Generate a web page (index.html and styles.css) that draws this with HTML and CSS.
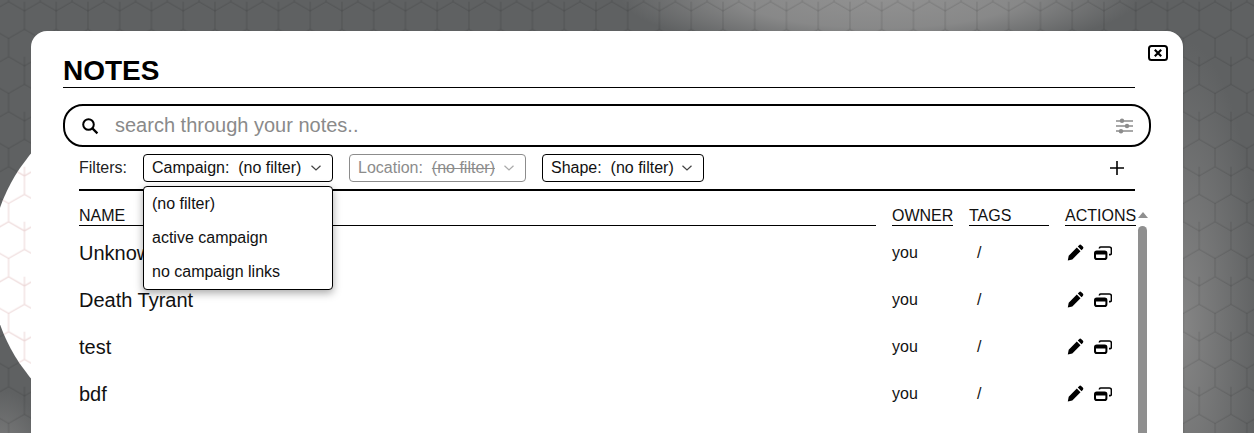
FILE: index.html
```html
<!DOCTYPE html>
<html lang="en">
<head>
<meta charset="utf-8">
<title>Notes</title>
<link rel="stylesheet" href="styles.css">
</head>
<body>
<svg class="backdrop" width="1254" height="433" aria-hidden="true">
  <defs>
    <pattern id="hexDark" width="31.75" height="55" patternUnits="userSpaceOnUse" patternTransform="translate(-7.3 1.7)">
      <path d="M0 9.2 15.875 0 31.75 9.2V27.6L15.875 36.7 0 27.6ZM15.875 36.7V55M0 9.2V0M31.75 9.2V0" fill="none" stroke="#000" stroke-opacity=".16" stroke-width=".9"/>
    </pattern>
    <pattern id="hexLight" width="31.75" height="55" patternUnits="userSpaceOnUse" patternTransform="translate(-7.3 1.7)">
      <path d="M0 9.2 15.875 0 31.75 9.2V27.6L15.875 36.7 0 27.6ZM15.875 36.7V55M0 9.2V0M31.75 9.2V0" fill="none" stroke="#ecd6d6" stroke-width="1"/>
    </pattern>
    <radialGradient id="glowTop">
      <stop offset="0" stop-color="#929292"/>
      <stop offset=".55" stop-color="#929292" stop-opacity=".8"/>
      <stop offset="1" stop-color="#929292" stop-opacity="0"/>
    </radialGradient>
    <radialGradient id="glowRight">
      <stop offset="0" stop-color="#858585"/>
      <stop offset="1" stop-color="#858585" stop-opacity="0"/>
    </radialGradient>
    <clipPath id="disc"><circle cx="165" cy="266" r="175"/></clipPath>
    <symbol id="pencil" viewBox="0 0 17 17">
      <path d="M12.1 1.2a1.6 1.6 0 0 1 2.3 0l1.4 1.4a1.6 1.6 0 0 1 0 2.3l-1.3 1.3-3.7-3.7ZM9.8 3.5l3.7 3.7-8.2 8.2-4.5 1 .9-4.6Z"/>
    </symbol>
    <symbol id="windows" viewBox="0 0 18 14">
      <rect x="1" y="5.4" width="11.4" height="7.6" rx="1.8" fill="none" stroke="#000" stroke-width="2"/>
      <path d="M1 7H12.4" stroke="#000" stroke-width="3"/>
      <path d="M5.4 2.6V2.2A1.2 1.2 0 0 1 6.6 1H15.4A2 2 0 0 1 17.4 3V7.4A1.2 1.2 0 0 1 16.2 8.6H15" fill="none" stroke="#000" stroke-width="1.6"/>
    </symbol>
    <symbol id="chev" viewBox="0 0 10 6">
      <path d="M.5.7 5 5 9.5.7" fill="none" stroke="currentColor" stroke-width="1.2"/>
    </symbol>
  </defs>
  <rect width="1254" height="433" fill="#5f6162"/>
  <ellipse cx="880" cy="-5" rx="260" ry="60" fill="url(#glowTop)"/>
  <ellipse cx="1183" cy="330" rx="78" ry="290" fill="url(#glowRight)"/>
  <ellipse cx="0" cy="470" rx="50" ry="80" fill="url(#glowRight)"/>
  <rect width="1254" height="433" fill="url(#hexDark)"/>
  <circle cx="165" cy="266" r="175" fill="#fff"/>
  <rect width="1254" height="433" fill="url(#hexLight)" clip-path="url(#disc)"/>
</svg>

<main class="modal">
  <button class="close" type="button" aria-label="Close">
    <svg width="20" height="16" viewBox="0 0 20 16"><rect x="1" y="1" width="18" height="14" rx="2.5" fill="none" stroke="#000" stroke-width="2"/><path d="M6.8 4.8 13.2 11.2M13.2 4.8 6.8 11.2" stroke="#000" stroke-width="2.2"/></svg>
  </button>
  <h1 class="title">NOTES</h1>

  <div class="search">
    <svg class="search-icon" width="18" height="18" viewBox="0 0 18 18"><circle cx="7.5" cy="7.5" r="5.3" fill="none" stroke="#000" stroke-width="2"/><path d="M11.4 11.4 16.4 16.4" stroke="#000" stroke-width="2.2"/></svg>
    <span class="placeholder">search through your notes..</span>
    <svg class="sliders" width="17" height="16" viewBox="0 0 17 16"><path d="M0 3H17M0 8H17M0 13H17" stroke="#8c8c8c" stroke-width="1.6"/><circle cx="6" cy="2.8" r="2.2" fill="#8c8c8c"/><circle cx="11" cy="8" r="2.2" fill="#8c8c8c"/><circle cx="5" cy="13.2" r="2.2" fill="#8c8c8c"/></svg>
  </div>

  <div class="filters">
    <span class="filters-label">Filters:</span>
    <div class="select-wrap">
      <div class="select select-campaign"><span>Campaign:&nbsp; (no filter)</span><svg class="chev"><use href="#chev"/></svg></div>
      <ul class="menu">
        <li>(no filter)</li>
        <li>active campaign</li>
        <li>no campaign links</li>
      </ul>
    </div>
    <div class="select select-location disabled"><span>Location:&nbsp; <s>(no filter)</s></span><svg class="chev"><use href="#chev"/></svg></div>
    <div class="select select-shape"><span>Shape:&nbsp; (no filter)</span><svg class="chev"><use href="#chev"/></svg></div>
    <svg class="plus" width="14" height="14" viewBox="0 0 14 14"><path d="M7 0V14M0 7H14" stroke="#000" stroke-width="1.6"/></svg>
  </div>

  <div class="table-area">
    <div class="table">
      <div class="row head">
        <span class="th">NAME</span><span class="th">OWNER</span><span class="th">TAGS</span><span class="th">ACTIONS</span>
      </div>
      <div class="row note"><span class="name">Unknown</span><span>you</span><span class="tags">/</span><span class="actions"><svg class="ic-pencil"><use href="#pencil"/></svg><svg class="ic-windows"><use href="#windows"/></svg></span></div>
      <div class="row note"><span class="name">Death Tyrant</span><span>you</span><span class="tags">/</span><span class="actions"><svg class="ic-pencil"><use href="#pencil"/></svg><svg class="ic-windows"><use href="#windows"/></svg></span></div>
      <div class="row note"><span class="name">test</span><span>you</span><span class="tags">/</span><span class="actions"><svg class="ic-pencil"><use href="#pencil"/></svg><svg class="ic-windows"><use href="#windows"/></svg></span></div>
      <div class="row note"><span class="name">bdf</span><span>you</span><span class="tags">/</span><span class="actions"><svg class="ic-pencil"><use href="#pencil"/></svg><svg class="ic-windows"><use href="#windows"/></svg></span></div>
    </div>
    <div class="scrollbar">
      <svg class="scroll-up" width="10" height="6" viewBox="0 0 10 6"><path d="M5 0 10 6H0Z" fill="#8f8f8f"/></svg>
      <div class="thumb"></div>
    </div>
  </div>
</main>
</body>
</html>
```

FILE: styles.css
```css
* { box-sizing: border-box; }

html, body {
  margin: 0;
  height: 433px;
  overflow: hidden;
}

body {
  background: #5f6162;
  font-family: "Liberation Sans", Arial, sans-serif;
  color: #000;
  padding: 31px 71px 0 31px;
}

.backdrop {
  position: absolute;
  left: 0;
  top: 0;
}

.modal {
  position: relative;
  width: 1152px;
  height: 402px;
  overflow: hidden;
  background: #fff;
  border-radius: 16px 16px 0 0;
  padding: 22px 32px 0;
}

.close {
  position: absolute;
  right: 15px;
  top: 14px;
  padding: 0;
  border: 0;
  background: none;
  line-height: 0;
}

.title {
  margin: 0 16px 0 0;
  height: 35px;
  font-size: 28px;
  line-height: 36px;
  font-weight: 700;
  border-bottom: 1px solid #000;
}

.search {
  display: flex;
  align-items: center;
  height: 43px;
  margin-top: 16px;
  padding: 0 16px 0 16px;
  border: 2px solid #000;
  border-radius: 20px;
}

.search-icon { flex: none; }

.placeholder {
  flex: 1;
  margin-left: 16px;
  font-size: 20px;
  color: #8a8a8a;
}

.filters {
  display: flex;
  align-items: center;
  height: 37px;
  margin: 7px 16px 0 16px;
  padding-bottom: 7px;
  border-bottom: 2px solid #000;
  font-size: 16px;
}

.filters-label {
  width: 64px;
  color: #222;
}

.select-wrap { position: relative; }

.select {
  display: flex;
  align-items: center;
  justify-content: space-between;
  height: 28px;
  padding: 0 11px 0 8px;
  border: 1px solid #000;
  border-radius: 4px;
  color: #111;
  white-space: nowrap;
}

.select-campaign { width: 190px; }
.select-location { width: 177px; }
.select-shape { width: 162px; }

.select-wrap + .select,
.select + .select { margin-left: 16px; }

.select.disabled {
  color: #8c8c8c;
  border-color: #8c8c8c;
}

.chev {
  flex: none;
  width: 10px;
  height: 6px;
  color: #444;
}

.select.disabled .chev { color: #aaa; }

.plus { margin-left: auto; margin-right: 11px; }

.menu {
  position: absolute;
  left: 0;
  top: 32px;
  z-index: 2;
  width: 190px;
  height: 104px;
  margin: 0;
  padding: 0 8px;
  list-style: none;
  background: #fff;
  border: 1px solid #000;
  border-radius: 4px;
  box-shadow: 0 3px 8px rgba(0, 0, 0, .35);
  color: #111;
}

.menu li {
  height: 34px;
  line-height: 34px;
}

.table-area {
  display: flex;
  margin-left: 16px;
}

.table { width: 1057px; }

.row {
  display: grid;
  grid-template-columns: 797px 61px 80px 71px;
  column-gap: 16px;
  width: 1057px;
}

.head {
  height: 35px;
  margin-bottom: 4px;
  align-items: end;
  font-size: 16px;
}

.th {
  height: 21px;
  line-height: 21px;
  border-bottom: 1px solid #000;
  white-space: nowrap;
  color: #111;
}

.note {
  height: 47px;
  align-items: center;
  font-size: 16px;
  color: #111;
}

.note > :not(.name) { padding-bottom: 2px; }

.name { font-size: 20px; }

.note > .tags { padding-left: 8px; }

.actions {
  display: flex;
  align-items: center;
  gap: 10px;
  padding-left: 2px;
}

.ic-pencil {
  width: 17px;
  height: 17px;
}

.ic-windows {
  width: 18px;
  height: 14px;
}

.scrollbar {
  display: flex;
  flex-direction: column;
  align-items: center;
  width: 9px;
  margin-left: 2px;
  padding-top: 21px;
}

.scroll-up { flex: none; }

.thumb {
  flex: none;
  width: 9px;
  height: 300px;
  margin-top: 8px;
  background: #8f8f8f;
  border-radius: 5px 5px 0 0;
}
```
